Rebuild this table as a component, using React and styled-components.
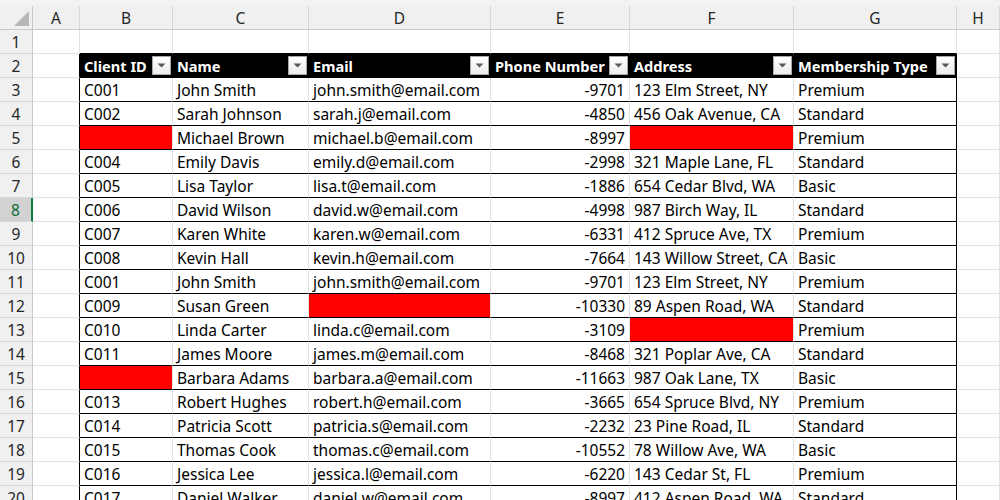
import React from 'react'
import styled, { createGlobalStyle } from 'styled-components'

const GlobalStyle = createGlobalStyle`
  html, body {
    margin: 0;
    padding: 0;
    background: #ffffff;
    overflow: hidden;
  }
  body {
    font-family: "Noto Sans", "Liberation Sans", sans-serif;
  }
`

const colors = {
  grid: '#e1e1e1',
  headBg: '#f0f0f0',
  headLine: '#c9c9c9',
  headText: '#262626',
  black: '#000000',
  red: '#ff0000',
  green: '#107c41',
}

const COLS = [33, 47, 93, 136, 182, 139, 164, 163, 43]
const LETTERS = ['A', 'B', 'C', 'D', 'E', 'F', 'G', 'H']

const HEADERS = ['Client ID', 'Name', 'Email', 'Phone Number', 'Address', 'Membership Type']

const ROWS = [
  ['C001', 'John Smith', 'john.smith@email.com', '-9701', '123 Elm Street, NY', 'Premium'],
  ['C002', 'Sarah Johnson', 'sarah.j@email.com', '-4850', '456 Oak Avenue, CA', 'Standard'],
  [null, 'Michael Brown', 'michael.b@email.com', '-8997', null, 'Premium'],
  ['C004', 'Emily Davis', 'emily.d@email.com', '-2998', '321 Maple Lane, FL', 'Standard'],
  ['C005', 'Lisa Taylor', 'lisa.t@email.com', '-1886', '654 Cedar Blvd, WA', 'Basic'],
  ['C006', 'David Wilson', 'david.w@email.com', '-4998', '987 Birch Way, IL', 'Standard'],
  ['C007', 'Karen White', 'karen.w@email.com', '-6331', '412 Spruce Ave, TX', 'Premium'],
  ['C008', 'Kevin Hall', 'kevin.h@email.com', '-7664', '143 Willow Street, CA', 'Basic'],
  ['C001', 'John Smith', 'john.smith@email.com', '-9701', '123 Elm Street, NY', 'Premium'],
  ['C009', 'Susan Green', null, '-10330', '89 Aspen Road, WA', 'Standard'],
  ['C010', 'Linda Carter', 'linda.c@email.com', '-3109', null, 'Premium'],
  ['C011', 'James Moore', 'james.m@email.com', '-8468', '321 Poplar Ave, CA', 'Standard'],
  [null, 'Barbara Adams', 'barbara.a@email.com', '-11663', '987 Oak Lane, TX', 'Basic'],
  ['C013', 'Robert Hughes', 'robert.h@email.com', '-3665', '654 Spruce Blvd, NY', 'Premium'],
  ['C014', 'Patricia Scott', 'patricia.s@email.com', '-2232', '23 Pine Road, IL', 'Standard'],
  ['C015', 'Thomas Cook', 'thomas.c@email.com', '-10552', '78 Willow Ave, WA', 'Basic'],
  ['C016', 'Jessica Lee', 'jessica.l@email.com', '-6220', '143 Cedar St, FL', 'Premium'],
  ['C017', 'Daniel Walker', 'daniel.w@email.com', '-8997', '412 Aspen Road, WA', 'Standard'],
]

const Sheet = styled.div`
  width: 1000px;
  height: 500px;
  overflow: hidden;
  background: #ffffff;
`

const TopStrip = styled.div`
  height: 6px;
  background: #f3f3f3;
`

const Grid = styled.div`
  display: grid;
  grid-template-columns: ${COLS.map((c) => `${c}px`).join(' ')};
  grid-auto-rows: 24px;
  font-size: 15.5px;
  color: #000000;
`

const Corner = styled.div`
  position: relative;
  background: ${colors.headBg};
  border-right: 1px solid ${colors.headLine};
  border-bottom: 1px solid ${colors.headLine};

  &::after {
    content: '';
    position: absolute;
    right: 3px;
    bottom: 3px;
    width: 0;
    height: 0;
    border-left: 15px solid transparent;
    border-bottom: 15px solid #b7b7b7;
  }
`

const ColHeader = styled.div`
  display: flex;
  align-items: center;
  justify-content: center;
  background: ${colors.headBg};
  border-right: 1px solid #d6d6d6;
  border-bottom: 1px solid ${colors.headLine};
  color: ${colors.headText};
  font-size: 15.5px;
`

const RowHeader = styled.div`
  display: flex;
  align-items: center;
  justify-content: center;
  background: ${({ selected }) => (selected ? '#d2d2d2' : colors.headBg)};
  color: ${({ selected }) => (selected ? '#0e6b37' : colors.headText)};
  border-right: ${({ selected }) =>
    selected ? `2px solid ${colors.green}` : `1px solid ${colors.headLine}`};
  border-bottom: 1px solid #d6d6d6;
  font-size: 15.5px;
`

const Cell = styled.div`
  display: flex;
  align-items: center;
  justify-content: ${({ align }) => (align === 'right' ? 'flex-end' : 'flex-start')};
  padding: 0 ${({ align }) => (align === 'right' ? '4px' : '0')} 0
    ${({ align }) => (align === 'right' ? '0' : '4px')};
  white-space: nowrap;
  overflow: hidden;
  background: ${({ fill }) => fill || 'transparent'};
  border-right: 1px solid ${({ edge }) => (edge ? colors.black : colors.grid)};
  border-bottom: 1px solid ${({ rule }) => (rule ? colors.black : colors.grid)};
`

const HeadCell = styled.div`
  display: flex;
  align-items: center;
  justify-content: space-between;
  padding-left: 4px;
  padding-right: 1px;
  background: ${colors.black};
  color: #ffffff;
  font-size: 14.6px;
  font-weight: bold;
  white-space: nowrap;
  border-right: 1px solid ${colors.black};
  border-bottom: 1px solid ${colors.black};
`

const FilterButton = styled.span`
  display: flex;
  align-items: center;
  justify-content: center;
  flex: 0 0 auto;
  width: 19px;
  height: 19px;
  box-sizing: border-box;
  border: 1px solid #a8a8a8;
  background: linear-gradient(#ffffff, #ececec);
`

const Arrow = () => (
  <svg width="9" height="5" viewBox="0 0 9 5">
    <path d="M0.5 0.5 H8.5 L4.5 4.5 Z" fill="#5a5a5a" />
  </svg>
)

const Filter = () => (
  <FilterButton>
    <Arrow />
  </FilterButton>
)

const App = () => (
  <Sheet>
    <GlobalStyle />
    <TopStrip />
    <Grid>
      <Corner />
      {LETTERS.map((l) => (
        <ColHeader key={l}>{l}</ColHeader>
      ))}

      <RowHeader>1</RowHeader>
      <Cell />
      {HEADERS.map((h) => (
        <Cell key={h} rule />
      ))}
      <Cell />

      <RowHeader>2</RowHeader>
      <Cell edge />
      {HEADERS.map((h) => (
        <HeadCell key={h}>
          <span>{h}</span>
          <Filter />
        </HeadCell>
      ))}
      <Cell />

      {ROWS.map((row, r) => {
        const n = r + 3
        return (
          <React.Fragment key={n}>
            <RowHeader selected={n === 8}>{n}</RowHeader>
            <Cell edge />
            {row.map((value, c) => (
              <Cell
                key={c}
                rule
                edge={c === row.length - 1}
                align={c === 3 ? 'right' : 'left'}
                fill={value === null ? colors.red : undefined}
              >
                {value}
              </Cell>
            ))}
            <Cell />
          </React.Fragment>
        )
      })}
    </Grid>
  </Sheet>
)

export default App
